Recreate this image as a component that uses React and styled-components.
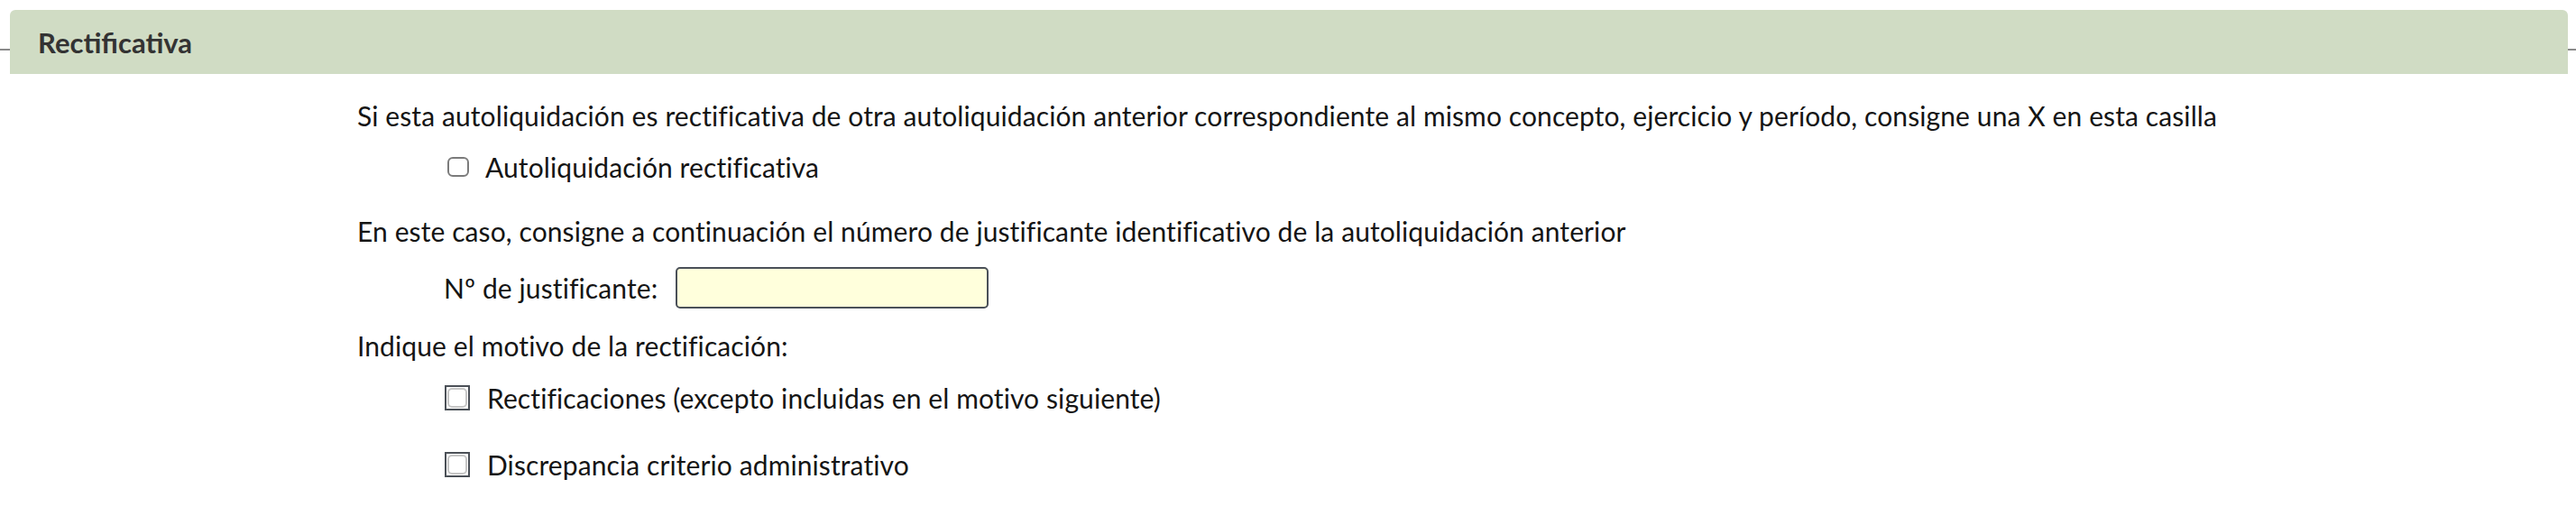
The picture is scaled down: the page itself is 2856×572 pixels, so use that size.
import React from "react";
import styled, { createGlobalStyle } from "styled-components";

const Global = createGlobalStyle`
  html, body { margin: 0; padding: 0; background: #ffffff; }
  body { font-family: Lato, "Liberation Sans", sans-serif; color: #151515; }
`;

const Page = styled.div`
  padding-top: 11px;
  width: 2856px;
`;

const HeaderRow = styled.div`
  display: flex;
  align-items: flex-start;
`;

const Rule = styled.div`
  width: ${(p) => p.$w}px;
  height: 2px;
  margin-top: 43px;
  background: #8a8a8a;
  flex: none;
`;

const Header = styled.div`
  flex: 1;
  height: 71px;
  background: #d0dcc4;
  border-radius: 6px 6px 0 0;
  display: flex;
  align-items: center;
  padding-left: 31px;
  font-family: Lato, "Liberation Sans", sans-serif;
  font-weight: 700;
  font-size: 31px;
  color: #333333;
`;

const Body = styled.div`
  padding-left: 396px;
  display: flex;
  flex-direction: column;
`;

const Line = styled.div`
  font-size: 30px;
  line-height: 40px;
  height: 40px;
  margin-top: ${(p) => p.$mt}px;
  letter-spacing: 0.1px;
  white-space: nowrap;
`;

const IndentRow = styled.div`
  display: flex;
  align-items: center;
  height: ${(p) => p.$h || 40}px;
  margin-top: ${(p) => p.$mt}px;
  padding-left: ${(p) => p.$pl}px;
  font-size: 30px;
  letter-spacing: 0.1px;
  white-space: nowrap;
`;

const RoundCheck = styled.input.attrs({ type: "checkbox" })`
  appearance: none;
  margin: 0 18px 0 0;
  width: 24px;
  height: 22px;
  border: 2px solid #7b7b7b;
  border-radius: 6px;
  background: #fff;
  box-sizing: border-box;
`;

const SquareFrame = styled.span`
  display: inline-flex;
  align-items: center;
  justify-content: center;
  width: 28px;
  height: 28px;
  box-sizing: border-box;
  border: 2px solid #4b5057;
  margin-right: 19px;
`;

const InnerCheck = styled.input.attrs({ type: "checkbox" })`
  appearance: none;
  margin: 0;
  width: 22px;
  height: 22px;
  border: 2px solid #c6c6c6;
  border-radius: 5px;
  background: #fff;
  box-sizing: border-box;
`;

const FieldLabel = styled.label`
  margin-right: 20px;
`;

const TextInput = styled.input.attrs({ type: "text" })`
  width: 347px;
  height: 46px;
  box-sizing: border-box;
  border: 2px solid #4a5058;
  border-radius: 5px;
  background: #ffffdc;
  margin: 0;
  padding: 0 8px;
  font-size: 24px;
`;

export default function App() {
  return (
    <Page>
      <Global />
      <HeaderRow>
        <Rule $w={11} />
        <Header>Rectificativa</Header>
        <Rule $w={9} />
      </HeaderRow>
      <Body>
        <Line $mt={26}>
          Si esta autoliquidación es rectificativa de otra autoliquidación anterior correspondiente al mismo concepto, ejercicio y período, consigne una X en esta casilla
        </Line>
        <IndentRow $mt={17} $pl={100}>
          <RoundCheck />
          <span>Autoliquidación rectificativa</span>
        </IndentRow>
        <Line $mt={31}>
          En este caso, consigne a continuación el número de justificante identificativo de la autoliquidación anterior
        </Line>
        <IndentRow $mt={20} $h={46} $pl={96}>
          <FieldLabel>Nº de justificante:</FieldLabel>
          <TextInput />
        </IndentRow>
        <Line $mt={21}>Indique el motivo de la rectificación:</Line>
        <IndentRow $mt={18} $pl={97}>
          <SquareFrame>
            <InnerCheck />
          </SquareFrame>
          <span>Rectificaciones (excepto incluidas en el motivo siguiente)</span>
        </IndentRow>
        <IndentRow $mt={34} $pl={97}>
          <SquareFrame>
            <InnerCheck />
          </SquareFrame>
          <span>Discrepancia criterio administrativo</span>
        </IndentRow>
      </Body>
    </Page>
  );
}
